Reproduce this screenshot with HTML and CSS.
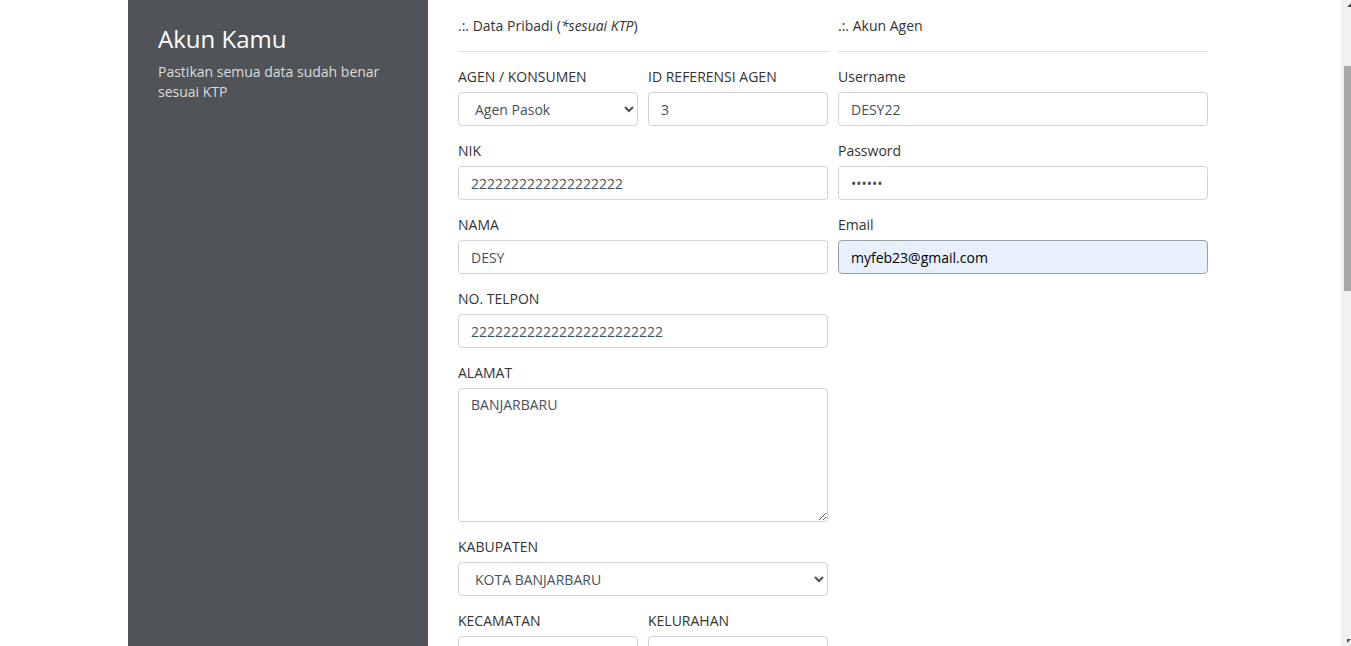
FILE: index.html
```html
<!DOCTYPE html>
<html lang="id">
<head>
<meta charset="utf-8">
<title>Akun Kamu</title>
<link rel="stylesheet" href="styles.css">
</head>
<body>
<div class="page">
  <div class="main">
    <aside class="panel">
      <h2 class="panel-title">Akun Kamu</h2>
      <p class="panel-sub">Pastikan semua data sudah benar sesuai KTP</p>
    </aside>
    <form class="form">
      <div class="col">
        <div class="sect">.:. Data Pribadi (<i>*sesuai KTP</i>)</div>
        <hr class="rule">
        <div class="row2">
          <div class="field">
            <label class="lbl">AGEN / KONSUMEN</label>
            <select class="ctl sel"><option>Agen Pasok</option></select>
          </div>
          <div class="field">
            <label class="lbl">ID REFERENSI AGEN</label>
            <input class="ctl" type="text" value="3">
          </div>
        </div>
        <div class="field">
          <label class="lbl">NIK</label>
          <input class="ctl" type="text" value="2222222222222222222">
        </div>
        <div class="field">
          <label class="lbl">NAMA</label>
          <input class="ctl" type="text" value="DESY">
        </div>
        <div class="field">
          <label class="lbl">NO. TELPON</label>
          <input class="ctl" type="text" value="222222222222222222222222">
        </div>
        <div class="field">
          <label class="lbl">ALAMAT</label>
          <textarea class="ctl area" spellcheck="false">BANJARBARU</textarea>
        </div>
        <div class="field">
          <label class="lbl">KABUPATEN</label>
          <select class="ctl sel"><option>KOTA BANJARBARU</option></select>
        </div>
        <div class="row2">
          <div class="field">
            <label class="lbl">KECAMATAN</label>
            <select class="ctl sel"><option></option></select>
          </div>
          <div class="field">
            <label class="lbl">KELURAHAN</label>
            <select class="ctl sel"><option></option></select>
          </div>
        </div>
      </div>
      <div class="col">
        <div class="sect">.:. Akun Agen</div>
        <hr class="rule">
        <div class="field">
          <label class="lbl">Username</label>
          <input class="ctl" type="text" value="DESY22">
        </div>
        <div class="field">
          <label class="lbl">Password</label>
          <input class="ctl" type="password" value="123456">
        </div>
        <div class="field">
          <label class="lbl">Email</label>
          <input class="ctl autofill" type="text" value="myfeb23@gmail.com">
        </div>
      </div>
    </form>
  </div>
  <div class="scrollbar">
    <div class="sb-arrow sb-up"></div>
    <div class="sb-thumb"></div>
    <div class="sb-fill"></div>
    <div class="sb-arrow sb-down"></div>
  </div>
</div>
</body>
</html>
```
FILE: styles.css
```css
* { box-sizing: border-box; }
html, body {
  margin: 0;
  padding: 0;
  height: 646px;
  overflow: hidden;
  background: #fff;
}
body {
  font-family: "Open Sans", "Noto Sans", sans-serif;
  font-size: 14px;
  line-height: 20px;
  color: #333;
}
.page {
  display: flex;
  height: 646px;
}
.main {
  flex: 1;
  display: flex;
  padding-left: 128px;
  overflow: hidden;
}
.panel {
  width: 300px;
  flex: none;
  background: #505459;
  padding: 24px 30px 0;
  color: #fff;
}
.panel-title {
  margin: 0;
  font-size: 24px;
  line-height: 29px;
  font-weight: 400;
}
.panel-sub {
  margin: 9px 0 0;
  color: #dcdcdc;
}
.form {
  display: flex;
  gap: 10px;
  padding: 16px 30px 0;
  margin: 0;
}
.col {
  width: 370px;
  flex: none;
}
.sect {
  color: #333;
}
.rule {
  border: 0;
  border-top: 1px solid #dedede;
  margin: 15px 0 15px;
  height: 0;
}
.row2 {
  display: flex;
  gap: 10px;
}
.row2 .field { width: 180px; }
.field {
  margin-bottom: 15px;
}
.lbl {
  display: block;
  margin-bottom: 5px;
  color: #333;
}
.ctl {
  display: block;
  width: 100%;
  height: 34px;
  padding: 6px 12px;
  font-family: "Open Sans", "Noto Sans", sans-serif;
  font-size: 14px;
  line-height: 20px;
  color: #495057;
  background: #fff;
  border: 1px solid #ced4da;
  border-radius: 4px;
  outline: none;
  margin: 0;
}
.sel {
  padding: 6px 12px;
}
.area {
  height: 134px;
  resize: vertical;
}
.autofill {
  background: #e8f0fe;
  border-color: #9a9fa5;
  color: #000;
}
.scrollbar {
  width: 10px;
  flex: none;
  background: #f1f1f1;
  display: flex;
  flex-direction: column;
  align-items: flex-end;
}
.sb-arrow {
  width: 0;
  height: 0;
  flex: none;
}
.sb-up {
  margin-top: 3px;
  border-left: 4px solid transparent;
  border-bottom: 4px solid #505050;
}
.sb-down {
  margin-bottom: 3px;
  border-right: 4px solid transparent;
  border-top: 4px solid #505050;
}
.sb-thumb {
  width: 7px;
  height: 225px;
  margin-top: 59px;
  background: #a8a8a8;
  flex: none;
}
.sb-fill { flex: 1; }
```
